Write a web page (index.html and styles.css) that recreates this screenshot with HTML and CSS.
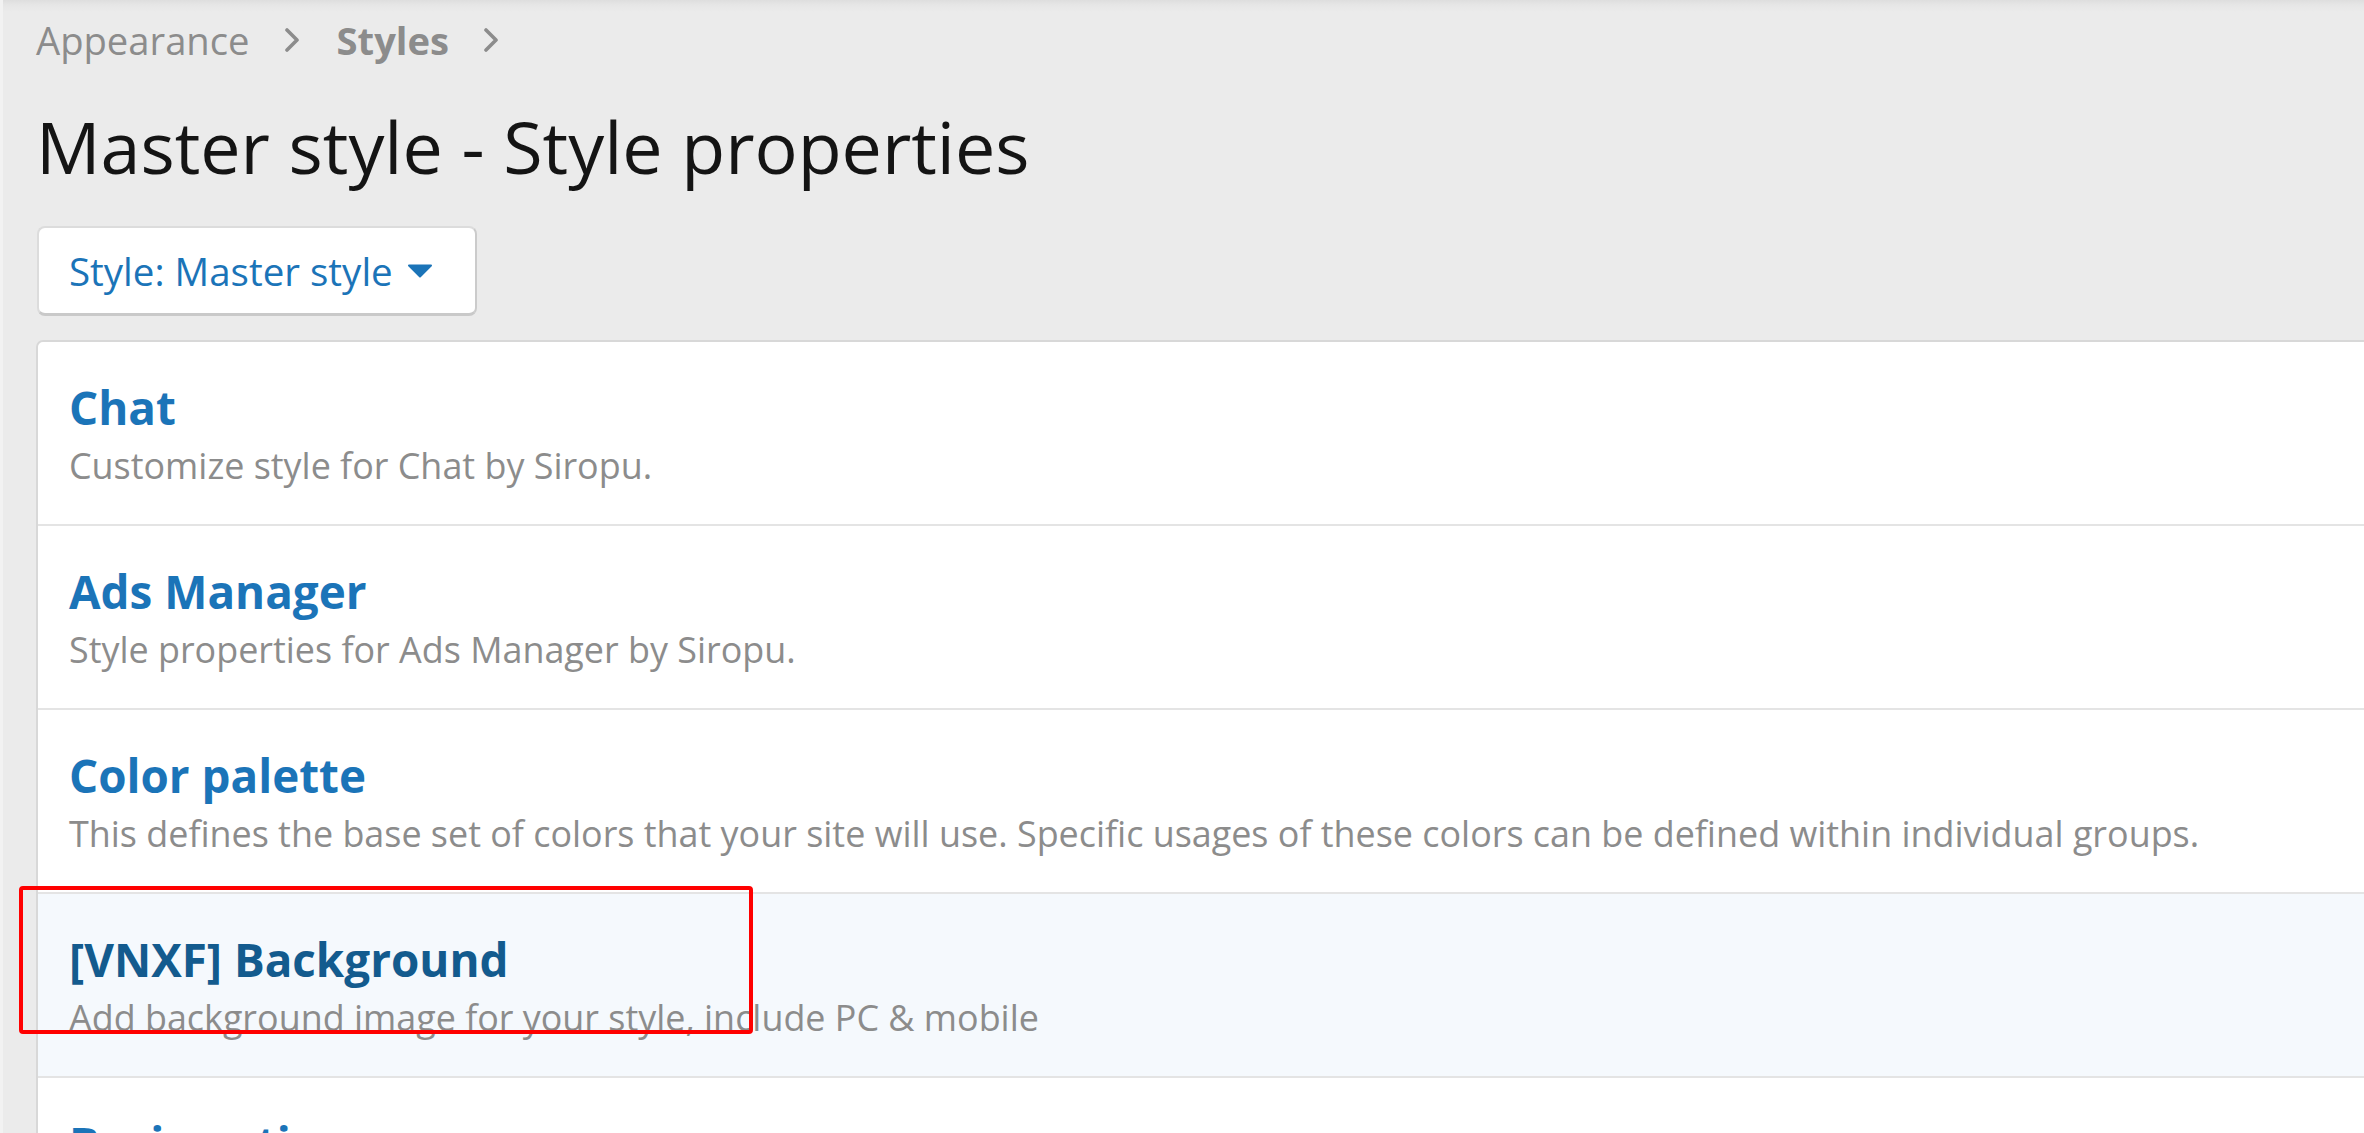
FILE: index.html
```html
<!DOCTYPE html>
<html lang="en">
<head>
<meta charset="utf-8">
<title>Master style - Style properties</title>
<link rel="stylesheet" href="styles.css">
</head>
<body>
<div class="page">
  <nav class="breadcrumbs">
    <a class="crumb" href="#">Appearance</a>
    <svg class="chev" viewBox="0 0 14 24" width="14" height="24"><polyline points="2,2 12,12 2,22" fill="none" stroke="#8c8c8c" stroke-width="3.6" stroke-linecap="round" stroke-linejoin="round"/></svg>
    <a class="crumb crumb--current" href="#">Styles</a>
    <svg class="chev" viewBox="0 0 14 24" width="14" height="24"><polyline points="2,2 12,12 2,22" fill="none" stroke="#8c8c8c" stroke-width="3.6" stroke-linecap="round" stroke-linejoin="round"/></svg>
  </nav>
  <h1 class="title">Master style - Style properties</h1>
  <div class="actions">
    <button class="menu-trigger" type="button">Style: Master style<svg class="caret" viewBox="0 0 26 14" width="26" height="14"><polygon points="2,1.5 24,1.5 13,12.5" fill="#1b74b8" stroke="#1b74b8" stroke-width="2" stroke-linejoin="round"/></svg></button>
  </div>
  <div class="block">
    <a class="row" href="#">
      <span class="row-title">Chat</span>
      <span class="row-desc">Customize style for Chat by Siropu.</span>
    </a>
    <a class="row" href="#">
      <span class="row-title">Ads Manager</span>
      <span class="row-desc">Style properties for Ads Manager by Siropu.</span>
    </a>
    <a class="row" href="#">
      <span class="row-title">Color palette</span>
      <span class="row-desc">This defines the base set of colors that your site will use. Specific usages of these colors can be defined within individual groups.</span>
    </a>
    <a class="row row--hover" href="#">
      <span class="row-title">[VNXF] Background</span>
      <span class="row-desc">Add background image for your style, include PC &amp; mobile</span>
    </a>
    <a class="row" href="#">
      <span class="row-title">Basic options</span>
    </a>
  </div>
</div>
<div class="annotation"></div>
</body>
</html>
```

FILE: styles.css
```css
html, body {
  margin: 0;
  padding: 0;
  height: 100%;
  overflow: hidden;
}
body {
  background: linear-gradient(#dedede 0px, #e6e6e6 5px, #ebebeb 12px, #ebebeb 100%);
  font-family: "Open Sans", "Noto Sans", sans-serif;
  color: #141414;
  position: relative;
}
.page {
  border-left: 3px solid #f2f2f2;
  padding: 14px 0 0 33px;
  min-height: 100%;
  box-sizing: border-box;
}
.breadcrumbs {
  display: flex;
  align-items: center;
  height: 52px;
  font-size: 38.2px;
  line-height: 52px;
  color: #8c8c8c;
}
.crumb {
  color: #8c8c8c;
  text-decoration: none;
}
.crumb--current {
  font-weight: 700;
}
.chev {
  margin: 0 38px 0 35px;
  width: 14px;
  height: 24px;
}
.title {
  margin: 37px 0 0 0;
  font-size: 71.8px;
  line-height: 86px;
  font-weight: 400;
  color: #141414;
}
.actions {
  margin-top: 37px;
  display: flex;
}
.menu-trigger {
  display: inline-flex;
  align-items: center;
  height: 90px;
  box-sizing: border-box;
  margin-left: 1px;
  padding: 0 42px 0 30px;
  background: #fff;
  border: 2px solid #dcdcdc;
  border-right-color: #cbcbcb;
  border-bottom: 3px solid #c9c9c9;
  border-radius: 8px;
  font-family: "Open Sans", "Noto Sans", sans-serif;
  font-size: 38.5px;
  color: #1b74b8;
  cursor: pointer;
}
.caret {
  margin-left: 14px;
  width: 26px;
  height: 14px;
}
.block {
  margin-top: 24px;
  margin-right: -20px;
  background: #fff;
  border: 2px solid #d8d8d8;
  border-radius: 7px;
}
.row {
  display: flex;
  flex-direction: column;
  padding: 35px 31px 29px 31px;
  text-decoration: none;
}
.row + .row {
  border-top: 2px solid #e4e4e4;
}
.row--hover {
  background: #f5f9fd;
}
.row-title {
  font-size: 45.8px;
  line-height: 60px;
  font-weight: 700;
  color: #1b74b8;
}
.row--hover .row-title {
  color: #135b8e;
}
.row-desc {
  font-size: 35.9px;
  line-height: 58px;
  color: #8c8c8c;
}
.annotation {
  position: absolute;
  left: 19px;
  top: 886px;
  width: 734px;
  height: 148px;
  box-sizing: border-box;
  border: 4.5px solid #ff0000;
  border-radius: 4px;
  pointer-events: none;
}
```
